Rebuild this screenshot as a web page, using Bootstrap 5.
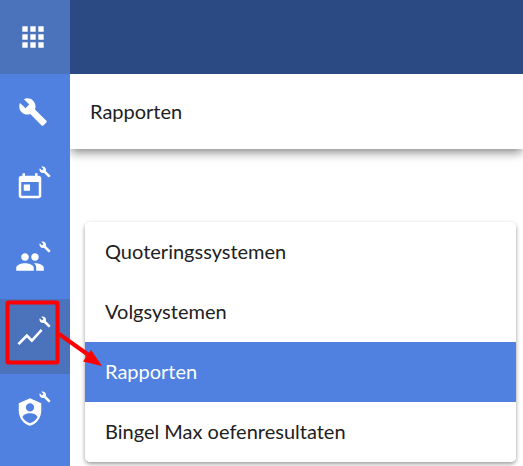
<!DOCTYPE html>
<html lang="nl">
<head>
<meta charset="utf-8">
<meta name="viewport" content="width=device-width, initial-scale=1">
<title>Rapporten</title>
<link href="https://cdn.jsdelivr.net/npm/bootstrap@5.3.0/dist/css/bootstrap.min.css" rel="stylesheet">
<style>
  body { font-family: Lato, "Open Sans", sans-serif; font-size: 20px; line-height: 24px; color: #212121; background: #fff; overflow: hidden; }
  .side-rail { width: 70px; background: #5080e0; }
  .rail-link { height: 75px; color: #fff; }
  .rail-link:first-child { height: 74px; }
  .rail-dark { background: #4b73bb; }
  .rail-icon { width: 30px; height: 30px; }
  .rail-apps { width: 32px; height: 32px; }
  .rail-link:nth-child(-n+2) { padding-right: 4px; }
  .with-tool { width: 40px; }
  .tool-badge { top: -6px; right: 4px; width: 12px; height: 12px; }
  .top-bar { height: 74px; background: #2b4a84; }
  .title-bar { height: 75px; background: #fff; box-shadow: 0 4px 10px -1px rgba(0,0,0,.5); clip-path: inset(0 0 -20px 0); }
  .title-bar h1 { font-size: 20px; line-height: 24px; font-weight: 400; padding-bottom: 2px; }
  .report-menu { margin: 73px 7px 0 15px; border-radius: 5px; box-shadow: 0 2px 4px rgba(0,0,0,.4); --bs-list-group-color: #212121; --bs-list-group-active-bg: #5080e0; --bs-list-group-border-width: 0; }
  .report-menu .list-group-item { padding: 17px 20px 19px; }
  .pointer-marks { left: 0; top: 290px; width: 110px; height: 90px; z-index: 5; pointer-events: none; }
</style>
<script src="https://cdn.jsdelivr.net/npm/bootstrap@5.3.0/dist/js/bootstrap.bundle.min.js" defer></script>
</head>
<body>
<svg class="d-none" aria-hidden="true">
  <symbol id="wrench" viewBox="0 0 24 24"><path fill="currentColor" d="M22.7 19l-9.1-9.1c.9-2.3.4-5-1.5-6.9-2-2-5-2.4-7.4-1.3L9 6 6 9 1.6 4.700C.4 7.100.9 10.100 2.900 12.100c1.900 1.900 4.600 2.400 6.900 1.500l9.100 9.100c.4.4 1 .4 1.400 0l2.300-2.300c.5-.4.5-1.100.1-1.400z"/></symbol>
</svg>
<div class="d-flex min-vh-100 position-relative">
  <nav class="side-rail d-flex flex-column flex-shrink-0" aria-label="Hoofdmenu">
    <a href="#" class="rail-link rail-dark d-flex align-items-center justify-content-center" aria-label="Apps">
      <svg class="rail-apps" viewBox="0 0 24 24" fill="currentColor"><path d="M4 8h4V4H4zm6 12h4v-4h-4zm-6 0h4v-4H4zm0-6h4v-4H4zm6 0h4v-4h-4zm6-10v4h4V4zm-6 4h4V4h-4zm6 6h4v-4h-4zm0 6h4v-4h-4z"/></svg>
    </a>
    <a href="#" class="rail-link d-flex align-items-center justify-content-center" aria-label="Instellingen">
      <svg class="rail-icon"><use href="#wrench"/></svg>
    </a>
    <a href="#" class="rail-link d-flex align-items-center justify-content-center" aria-label="Agenda">
      <span class="with-tool d-flex position-relative">
        <svg class="rail-icon" viewBox="0 0 24 24" fill="currentColor"><path d="M19 3h-1V1h-2v2H8V1H6v2H5c-1.11 0-1.99.9-1.99 2L3 19c0 1.1.89 2 2 2h14c1.1 0 2-.9 2-2V5c0-1.1-.9-2-2-2zm0 16H5V8h14zM7 10h5v5H7z"/></svg>
        <svg class="tool-badge position-absolute"><use href="#wrench"/></svg>
      </span>
    </a>
    <a href="#" class="rail-link d-flex align-items-center justify-content-center" aria-label="Groepen">
      <span class="with-tool d-flex position-relative">
        <svg class="rail-icon" viewBox="0 0 24 24" fill="currentColor"><path d="M16 11c1.660 0 2.990-1.340 2.990-3S17.660 5 16 5s-3 1.340-3 3 1.340 3 3 3zm-8 0c1.660 0 2.990-1.340 2.990-3S9.660 5 8 5 5 6.340 5 8s1.340 3 3 3zm0 2c-2.330 0-7 1.170-7 3.500V19h14v-2.500C15 14.170 10.330 13 8 13zm8 0c-.29 0-.62.02-.97.05 1.160.84 1.970 1.970 1.970 3.450V19h6v-2.500c0-2.330-4.670-3.500-7-3.500z"/></svg>
        <svg class="tool-badge position-absolute"><use href="#wrench"/></svg>
      </span>
    </a>
    <a href="#" class="rail-link rail-dark d-flex align-items-center justify-content-center" aria-label="Rapporten" aria-current="page">
      <span class="with-tool d-flex position-relative">
        <svg class="rail-icon" viewBox="0 0 24 24" fill="currentColor"><path d="M3.500 18.490l6-6.010 4 4L22 6.920l-1.410-1.410-7.090 7.970-4-4L2 16.990z"/></svg>
        <svg class="tool-badge position-absolute"><use href="#wrench"/></svg>
      </span>
    </a>
    <a href="#" class="rail-link d-flex align-items-center justify-content-center" aria-label="Beheer">
      <span class="with-tool d-flex position-relative">
        <svg class="rail-icon" viewBox="0 0 24 24" fill="currentColor" fill-rule="evenodd"><path d="M12 1L3 5v6c0 5.550 3.840 10.740 9 12 5.160-1.260 9-6.450 9-12V5zM12 5a3.300 3.300 0 1 1 0 6.600 3.300 3.300 0 0 1 0-6.600zM6 16.200C6.400 14 9.500 13 12 13s5.600 1 6 3.200C16.700 18.400 14.600 20.300 12 21c-2.600-.7-4.700-2.600-6-4.800z"/></svg>
        <svg class="tool-badge position-absolute"><use href="#wrench"/></svg>
      </span>
    </a>
  </nav>
  <div class="flex-grow-1 overflow-hidden">
    <header>
      <div class="top-bar"></div>
      <div class="title-bar d-flex align-items-center px-3"><h1 class="m-0 ps-1">Rapporten</h1></div>
    </header>
    <main>
      <div class="list-group report-menu">
        <a href="#" class="list-group-item list-group-item-action">Quoteringssystemen</a>
        <a href="#" class="list-group-item list-group-item-action">Volgsystemen</a>
        <a href="#" class="list-group-item list-group-item-action active" aria-current="true">Rapporten</a>
        <a href="#" class="list-group-item list-group-item-action">Bingel Max oefenresultaten</a>
      </div>
    </main>
  </div>
  <svg class="pointer-marks position-absolute" viewBox="0 0 110 90" aria-hidden="true">
    <rect x="7.500" y="12.500" width="50" height="60" rx="1" fill="none" stroke="#f00" stroke-width="4"/>
    <path d="M59 44L90 66" stroke="#f00" stroke-width="4"/>
    <path d="M102 76L83 71.500L91 60z" fill="#f00"/>
  </svg>
</div>
</body>
</html>
